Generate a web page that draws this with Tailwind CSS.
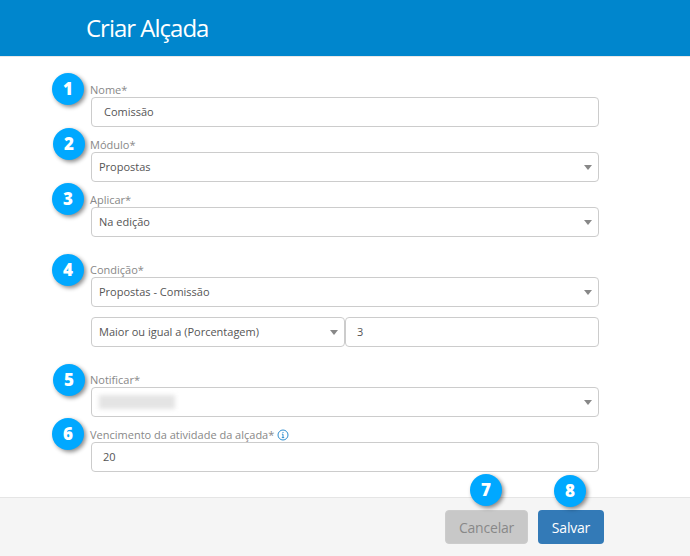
<!DOCTYPE html>
<html lang="en">
<head>
    <meta charset="UTF-8">
    <title>Criar Alçada</title>
    <script src="https://cdn.jsdelivr.net/npm/@tailwindcss/browser@4"></script>
</head>
<body class="bg-white font-['Open_Sans',sans-serif] overflow-hidden">
<div class="relative w-[690px] h-[556px] flex flex-col">

    <!-- Header -->
    <header class="h-[57px] shrink-0 bg-[#0086cd] border-b border-[#e8e8e8] pl-[86px] flex items-center">
        <h1 class="text-[24px] leading-[30px] tracking-[-1px] text-white">Criar Alçada</h1>
    </header>

    <!-- Form -->
    <main class="flex-1 pl-[91px] pr-[91px] pt-[25px] text-[11px] text-[#555]">
        <div>
            <label class="block h-[15px] leading-[15px] -ml-px text-[#888]">Nome*</label>
            <div class="h-[30px] border border-[#ccc] rounded-[4px] flex items-center pl-[12px] pt-[1px]">Comissão</div>
        </div>
        <div class="mt-[10px]">
            <label class="block h-[15px] leading-[15px] -ml-px text-[#888]">Módulo*</label>
            <div class="h-[30px] border border-[#ccc] rounded-[4px] flex items-center justify-between pl-[7px] pr-[6px]">
                <span>Propostas</span>
                <span class="w-0 h-0 border-x-[4px] border-x-transparent border-t-[5px] border-t-[#888]"></span>
            </div>
        </div>
        <div class="mt-[10px]">
            <label class="block h-[15px] leading-[15px] -ml-px text-[#888]">Aplicar*</label>
            <div class="h-[30px] border border-[#ccc] rounded-[4px] flex items-center justify-between pl-[7px] pr-[6px]">
                <span>Na edição</span>
                <span class="w-0 h-0 border-x-[4px] border-x-transparent border-t-[5px] border-t-[#888]"></span>
            </div>
        </div>
        <div class="mt-[25px]">
            <label class="block h-[15px] leading-[15px] -ml-px text-[#888]">Condição*</label>
            <div class="h-[30px] border border-[#ccc] rounded-[4px] flex items-center justify-between pl-[7px] pr-[6px]">
                <span>Propostas - Comissão</span>
                <span class="w-0 h-0 border-x-[4px] border-x-transparent border-t-[5px] border-t-[#888]"></span>
            </div>
            <div class="mt-[10px] flex">
                <div class="w-[254px] h-[30px] border border-[#ccc] rounded-[4px] flex items-center justify-between pl-[7px] pr-[6px]">
                    <span>Maior ou igual a (Porcentagem)</span>
                    <span class="w-0 h-0 border-x-[4px] border-x-transparent border-t-[5px] border-t-[#888]"></span>
                </div>
                <div class="flex-1 h-[30px] border border-[#ccc] rounded-[4px] flex items-center pl-[11px] pt-[1px]">3</div>
            </div>
        </div>
        <div class="mt-[25px]">
            <label class="block h-[15px] leading-[15px] -ml-px text-[#888]">Notificar*</label>
            <div class="h-[30px] border border-[#ccc] rounded-[4px] flex items-center justify-between pl-[7px] pr-[6px]">
                <span class="w-[76px] h-[14px] bg-[#e4e4e4] blur-[2px]"></span>
                <span class="w-0 h-0 border-x-[4px] border-x-transparent border-t-[5px] border-t-[#888]"></span>
            </div>
        </div>
        <div class="mt-[10px]">
            <label class="h-[15px] leading-[15px] -ml-px text-[#888] flex items-center gap-[3px]">
                Vencimento da atividade da alçada*
                <svg width="12" height="12" viewBox="0 0 12 12" fill="none" stroke="#2f8fd0" stroke-width="1">
                    <circle cx="6" cy="6" r="5"></circle>
                    <path d="M6 5.2V8.6M4.8 8.6H7.2M4.9 5.2H6"></path>
                    <path d="M6 3V4"></path>
                </svg>
            </label>
            <div class="h-[30px] border border-[#ccc] rounded-[4px] flex items-center pl-[11px] pt-[1px]">20</div>
        </div>
    </main>

    <!-- Footer -->
    <footer class="h-[59px] shrink-0 bg-[#f5f5f5] border-t border-[#e5e5e5] flex justify-end items-start gap-[10px] pt-[12px] pr-[86px]">
        <button class="w-[83px] h-[34px] bg-[#c8c8c8] border border-[#ccc] rounded-[4px] text-[14px] font-medium tracking-[-0.2px] text-[#888]">Cancelar</button>
        <button class="w-[66px] h-[34px] bg-[#337ab7] rounded-[4px] text-[14px] font-medium tracking-[-0.2px] text-white">Salvar</button>
    </footer>

    <!-- Numbered callouts over the form -->
    <span class="absolute left-[52px] top-[73px] w-[32px] h-[32px] rounded-full bg-[#00a8ff] text-white text-[17px] font-extrabold flex items-center justify-center shadow-[2px_2px_4px_rgba(0,0,0,0.45)]">1</span>
    <span class="absolute left-[53px] top-[128px] w-[32px] h-[32px] rounded-full bg-[#00a8ff] text-white text-[17px] font-extrabold flex items-center justify-center shadow-[2px_2px_4px_rgba(0,0,0,0.45)]">2</span>
    <span class="absolute left-[52px] top-[183px] w-[32px] h-[32px] rounded-full bg-[#00a8ff] text-white text-[17px] font-extrabold flex items-center justify-center shadow-[2px_2px_4px_rgba(0,0,0,0.45)]">3</span>
    <span class="absolute left-[52px] top-[254px] w-[32px] h-[32px] rounded-full bg-[#00a8ff] text-white text-[17px] font-extrabold flex items-center justify-center shadow-[2px_2px_4px_rgba(0,0,0,0.45)]">4</span>
    <span class="absolute left-[53px] top-[364px] w-[32px] h-[32px] rounded-full bg-[#00a8ff] text-white text-[17px] font-extrabold flex items-center justify-center shadow-[2px_2px_4px_rgba(0,0,0,0.45)]">5</span>
    <span class="absolute left-[52px] top-[418px] w-[32px] h-[32px] rounded-full bg-[#00a8ff] text-white text-[17px] font-extrabold flex items-center justify-center shadow-[2px_2px_4px_rgba(0,0,0,0.45)]">6</span>
    <span class="absolute left-[470px] top-[474px] w-[32px] h-[32px] rounded-full bg-[#00a8ff] text-white text-[17px] font-extrabold flex items-center justify-center shadow-[2px_2px_4px_rgba(0,0,0,0.45)]">7</span>
    <span class="absolute left-[554px] top-[475px] w-[32px] h-[32px] rounded-full bg-[#00a8ff] text-white text-[17px] font-extrabold flex items-center justify-center shadow-[2px_2px_4px_rgba(0,0,0,0.45)]">8</span>
</div>
</body>
</html>
